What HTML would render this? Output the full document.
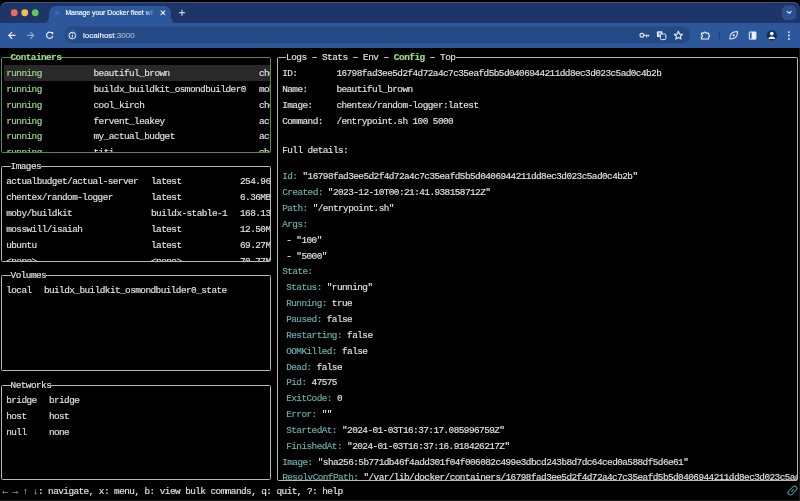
<!DOCTYPE html>
<html><head><meta charset="utf-8"><style>
*{margin:0;padding:0;box-sizing:border-box}
html,body{width:800px;height:501px;overflow:hidden;background:#000}
body{position:relative;font-family:"Liberation Sans",sans-serif}
.a{position:absolute}
.t{position:absolute;white-space:pre;font-family:"Liberation Mono",monospace;font-size:9.4px;line-height:10px;letter-spacing:-0.55px;-webkit-text-stroke-width:0.15px}
#root{position:absolute;left:0;top:0;width:800px;height:501px;will-change:transform}
.box{position:absolute;border:1px solid #b8b8b8;border-radius:1.5px}
.clip{position:absolute;overflow:hidden}
</style></head><body><div id="root">

<div class="a" style="left:0;top:0;width:800px;height:48px;background:#000"></div>
<div class="a" style="left:0;top:2px;width:800px;height:46px;background:#1d3567;border-radius:7px 7px 0 0;box-shadow:inset 0 1px 0 #3a5584"></div>
<div class="a" style="left:0;top:22.5px;width:800px;height:25px;background:#2d579b"></div>
<div class="a" style="left:49px;top:5.5px;width:122px;height:17.5px;background:#2d579b;border-radius:7px 7px 0 0"></div>
<svg class="a" style="left:0;top:0" width="800" height="48">
 <path d="M43 22.5 Q49 22.5 49 16.5 V22.5 Z" fill="#2d579b"/>
 <path d="M177 22.5 Q171 22.5 171 16.5 V22.5 Z" fill="#2d579b"/>
 <rect x="782" y="5.6" width="14.3" height="14.3" rx="4.5" fill="#2c4f90"/>
 <path d="M787.2 11.4 L789.2 13.4 L791.2 11.4" stroke="#e8eefa" stroke-width="1.05" fill="none" stroke-linecap="round" stroke-linejoin="round"/>
 <circle cx="14.25" cy="12.75" r="3.4" fill="#ed6a5e"/>
 <circle cx="24.75" cy="12.75" r="3.4" fill="#f5bf4f"/>
 <circle cx="35.25" cy="12.75" r="3.4" fill="#62c554"/>
 <circle cx="57" cy="12.7" r="2.3" fill="#3e62c0"/>
 <path d="M161 10.8 L164.8 14.6 M164.8 10.8 L161 14.6" stroke="#e8eefa" stroke-width="1.05" stroke-linecap="round"/>
 <path d="M179.3 12.75 H184.7 M182 10.05 V15.45" stroke="#e8eefa" stroke-width="1" stroke-linecap="round"/>
 <!-- back -->
 <path d="M15 35.4 H8.8 M11.8 32.3 L8.7 35.4 L11.8 38.5" stroke="#eef2fb" stroke-width="1.1" fill="none" stroke-linecap="round" stroke-linejoin="round"/>
 <path d="M27.6 35.4 H33.6 M30.6 32.3 L33.7 35.4 L30.6 38.5" stroke="#8ea7d3" stroke-width="1.1" fill="none" stroke-linecap="round" stroke-linejoin="round"/>
 <path d="M52.3 33.6 A3.1 3.1 0 1 0 52.6 36.3" stroke="#eef2fb" stroke-width="1.1" fill="none" stroke-linecap="round"/>
 <path d="M50.6 32 L53.2 32 L53.2 34.6 Z" fill="#eef2fb"/>
 <rect x="64.4" y="26.5" width="626" height="16.8" rx="8.4" fill="#244984"/>
 <circle cx="72.3" cy="34.9" r="6.5" fill="#2a5290"/>
 <circle cx="72.3" cy="35.5" r="3.3" stroke="#eef2fb" stroke-width="1" fill="none"/>
 <path d="M72.3 34.7 V37.4" stroke="#eef2fb" stroke-width="1"/>
 <circle cx="72.3" cy="33.4" r="0.5" fill="#eef2fb"/>
 <!-- key -->
 <circle cx="641.9" cy="35.2" r="1.9" stroke="#dfe6f5" stroke-width="1.2" fill="none"/>
 <path d="M643.8 35.2 H648.6 V36.6 M646.6 35.2 V37.6" stroke="#dfe6f5" stroke-width="1.1" fill="none"/>
 <!-- translate -->
 <rect x="656.9" y="31.3" width="5.6" height="5.8" rx="0.9" fill="#dfe6f5"/>
 <path d="M658.6 33.2 h2.2 M659.7 33.2 v2.4" stroke="#244984" stroke-width="0.7"/>
 <rect x="660.4" y="34" width="5.4" height="5.6" rx="0.9" stroke="#dfe6f5" stroke-width="1" fill="#244984"/>
 <!-- star -->
 <path d="M678.4 31.3 L679.6 34.1 L682.5 34.3 L680.3 36.2 L681 39.1 L678.4 37.5 L675.8 39.1 L676.5 36.2 L674.3 34.3 L677.2 34.1 Z" stroke="#dfe6f5" stroke-width="1.15" fill="none" stroke-linejoin="round"/>
 <!-- puzzle -->
 <path d="M701.4 33.1 H703.7 A1.05 1.05 0 0 1 705.8 33.1 H708.6 V34.8 A1.05 1.05 0 0 1 708.6 36.9 V39 H701.4 V37 A1.1 1.1 0 0 0 701.4 34.8 Z" stroke="#eef2fb" stroke-width="1.1" fill="none" stroke-linejoin="round"/>
 <path d="M719.3 32 V39" stroke="#1d3b70" stroke-width="1"/>
 <!-- gemini-ish icon -->
 <path d="M729.9 38.9 Q729.3 31.7 737.5 31.5 Q737.9 38.9 729.9 38.9 Z" stroke="#eef2fb" stroke-width="1.05" fill="none" stroke-linejoin="round"/>
 <circle cx="733.7" cy="35.3" r="1.1" fill="#eef2fb"/>
 <!-- sidebar -->
 <rect x="749.3" y="32" width="6.6" height="7.1" rx="0.3" stroke="#eef2fb" stroke-width="1" fill="none"/>
 <rect x="751.6" y="32" width="4.3" height="7.1" fill="#eef2fb"/>
 <!-- profile -->
 <circle cx="771.8" cy="35.4" r="5.1" fill="#142a57"/>
 <circle cx="771.8" cy="33.6" r="1.9" fill="#f2f5fc"/>
 <path d="M768.4 39 Q768.6 36.4 771.8 36.4 Q775 36.4 775.2 39 Z" fill="#f2f5fc"/>
 <circle cx="788.9" cy="32.1" r="0.95" fill="#eef2fb"/>
 <circle cx="788.9" cy="35.5" r="0.95" fill="#eef2fb"/>
 <circle cx="788.9" cy="38.9" r="0.95" fill="#eef2fb"/>
</svg>
<div class="a" style="left:65.4px;top:8px;font-size:6.85px;line-height:9px;color:#f2f5fc;-webkit-text-stroke-width:0.2px;white-space:pre;width:93px;overflow:hidden;-webkit-mask-image:linear-gradient(90deg,#000 79px,transparent 89px)">Manage your Docker fleet with</div>
<div class="a" style="left:83px;top:30.5px;font-size:8px;line-height:10px;color:#f2f5fc;-webkit-text-stroke-width:0.15px;white-space:pre">localhost<span style="color:#a3b4d6">:3000</span></div>
<div class="box" style="left:1px;top:57px;width:270px;height:96px;border-color:#5a8a4a"></div><div class="clip" style="left:2px;top:58px;width:268px;height:94px"><div class="a" style="left:-2px;top:-58px;width:800px;height:501px"><div class="a" style="left:3.5px;top:65px;width:266px;height:15.6px;background:#292929"></div><div class="t" style="left:6.20px;top:69px;color:#a3d991;">running</div><div class="t" style="left:93.50px;top:69px;color:#e2e2e2;">beautiful_brown</div><div class="t" style="left:258.90px;top:69px;color:#e2e2e2;">chentex</div><div class="t" style="left:6.20px;top:85px;color:#a3d991;">running</div><div class="t" style="left:93.50px;top:85px;color:#e2e2e2;">buildx_buildkit_osmondbuilder0</div><div class="t" style="left:258.90px;top:85px;color:#e2e2e2;">moby</div><div class="t" style="left:6.20px;top:101px;color:#a3d991;">running</div><div class="t" style="left:93.50px;top:101px;color:#e2e2e2;">cool_kirch</div><div class="t" style="left:258.90px;top:101px;color:#e2e2e2;">chentex</div><div class="t" style="left:6.20px;top:117px;color:#a3d991;">running</div><div class="t" style="left:93.50px;top:117px;color:#e2e2e2;">fervent_leakey</div><div class="t" style="left:258.90px;top:117px;color:#e2e2e2;">actual</div><div class="t" style="left:6.20px;top:132px;color:#a3d991;">running</div><div class="t" style="left:93.50px;top:132px;color:#e2e2e2;">my_actual_budget</div><div class="t" style="left:258.90px;top:132px;color:#e2e2e2;">actual</div><div class="t" style="left:6.20px;top:148px;color:#a3d991;">running</div><div class="t" style="left:93.50px;top:148px;color:#e2e2e2;">titi</div><div class="t" style="left:258.90px;top:148px;color:#e2e2e2;">chentex</div></div></div><div class="t" style="left:10.50px;top:53px;background:#000;"><span style="color:#9de086;font-weight:bold;">Containers</span></div><div class="box" style="left:1px;top:166px;width:270px;height:96px;border-color:#b8b8b8"></div><div class="clip" style="left:2px;top:167px;width:268px;height:94px"><div class="a" style="left:-2px;top:-167px;width:800px;height:501px"><div class="t" style="left:6.20px;top:177px;color:#e2e2e2;">actualbudget/actual-server</div><div class="t" style="left:151.00px;top:177px;color:#e2e2e2;">latest</div><div class="t" style="left:240.00px;top:177px;color:#e2e2e2;">254.96MB</div><div class="t" style="left:6.20px;top:193px;color:#e2e2e2;">chentex/random-logger</div><div class="t" style="left:151.00px;top:193px;color:#e2e2e2;">latest</div><div class="t" style="left:240.00px;top:193px;color:#e2e2e2;">6.36MB</div><div class="t" style="left:6.20px;top:209px;color:#e2e2e2;">moby/buildkit</div><div class="t" style="left:151.00px;top:209px;color:#e2e2e2;">buildx-stable-1</div><div class="t" style="left:240.00px;top:209px;color:#e2e2e2;">168.13MB</div><div class="t" style="left:6.20px;top:225px;color:#e2e2e2;">mosswill/isaiah</div><div class="t" style="left:151.00px;top:225px;color:#e2e2e2;">latest</div><div class="t" style="left:240.00px;top:225px;color:#e2e2e2;">12.50MB</div><div class="t" style="left:6.20px;top:241px;color:#e2e2e2;">ubuntu</div><div class="t" style="left:151.00px;top:241px;color:#e2e2e2;">latest</div><div class="t" style="left:240.00px;top:241px;color:#e2e2e2;">69.27MB</div><div class="t" style="left:6.20px;top:257px;color:#e2e2e2;">&lt;none&gt;</div><div class="t" style="left:151.00px;top:257px;color:#e2e2e2;">&lt;none&gt;</div><div class="t" style="left:240.00px;top:257px;color:#e2e2e2;">70.77MB</div></div></div><div class="t" style="left:10.60px;top:162px;background:#000;"><span style="color:#e2e2e2;">Images</span></div><div class="box" style="left:1px;top:275px;width:270px;height:96px;border-color:#b8b8b8"></div><div class="clip" style="left:2px;top:276px;width:268px;height:94px"><div class="a" style="left:-2px;top:-276px;width:800px;height:501px"><div class="t" style="left:6.20px;top:286px;color:#e2e2e2;">local</div><div class="t" style="left:43.90px;top:286px;color:#e2e2e2;">buildx_buildkit_osmondbuilder0_state</div></div></div><div class="t" style="left:10.60px;top:271px;background:#000;"><span style="color:#e2e2e2;">Volumes</span></div><div class="box" style="left:1px;top:385px;width:270px;height:95px;border-color:#b8b8b8"></div><div class="clip" style="left:2px;top:386px;width:268px;height:93px"><div class="a" style="left:-2px;top:-386px;width:800px;height:501px"><div class="t" style="left:6.20px;top:396px;color:#e2e2e2;">bridge</div><div class="t" style="left:48.90px;top:396px;color:#e2e2e2;">bridge</div><div class="t" style="left:6.20px;top:412px;color:#e2e2e2;">host</div><div class="t" style="left:48.90px;top:412px;color:#e2e2e2;">host</div><div class="t" style="left:6.20px;top:428px;color:#e2e2e2;">null</div><div class="t" style="left:48.90px;top:428px;color:#e2e2e2;">none</div></div></div><div class="t" style="left:10.60px;top:381px;background:#000;"><span style="color:#e2e2e2;">Networks</span></div><div class="box" style="left:277px;top:57px;width:521px;height:424px;border-color:#b8b8b8"></div><div class="clip" style="left:278px;top:58px;width:519px;height:422px"><div class="a" style="left:-278px;top:-58px;width:800px;height:501px"><div class="t" style="left:282.20px;top:69px;color:#e2e2e2;">ID:</div><div class="t" style="left:336.40px;top:69px;color:#e2e2e2;">16798fad3ee5d2f4d72a4c7c35eafd5b5d0406944211dd8ec3d023c5ad0c4b2b</div><div class="t" style="left:282.20px;top:85px;color:#e2e2e2;">Name:</div><div class="t" style="left:336.40px;top:85px;color:#e2e2e2;">beautiful_brown</div><div class="t" style="left:282.20px;top:101px;color:#e2e2e2;">Image:</div><div class="t" style="left:336.40px;top:101px;color:#e2e2e2;">chentex/random-logger:latest</div><div class="t" style="left:282.20px;top:117px;color:#e2e2e2;">Command:</div><div class="t" style="left:336.40px;top:117px;color:#e2e2e2;">/entrypoint.sh 100 5000</div><div class="t" style="left:282.20px;top:146px;color:#e2e2e2;">Full details:</div><div class="t" style="left:282.20px;top:172px"><span style="color:#68b3ac">Id:</span><span style="color:#e2e2e2"> &quot;16798fad3ee5d2f4d72a4c7c35eafd5b5d0406944211dd8ec3d023c5ad0c4b2b&quot;</span></div><div class="t" style="left:282.20px;top:188px"><span style="color:#68b3ac">Created:</span><span style="color:#e2e2e2"> &quot;2023-12-10T00:21:41.938158712Z&quot;</span></div><div class="t" style="left:282.20px;top:204px"><span style="color:#68b3ac">Path:</span><span style="color:#e2e2e2"> &quot;/entrypoint.sh&quot;</span></div><div class="t" style="left:282.20px;top:220px"><span style="color:#68b3ac">Args:</span></div><div class="t" style="left:281.10px;top:236px"><span style="color:#e2e2e2"> - &quot;100&quot;</span></div><div class="t" style="left:281.10px;top:252px"><span style="color:#e2e2e2"> - &quot;5000&quot;</span></div><div class="t" style="left:282.20px;top:267px"><span style="color:#68b3ac">State:</span></div><div class="t" style="left:281.10px;top:283px"><span style="color:#68b3ac"> Status:</span><span style="color:#e2e2e2"> &quot;running&quot;</span></div><div class="t" style="left:281.10px;top:299px"><span style="color:#68b3ac"> Running:</span><span style="color:#e2e2e2"> true</span></div><div class="t" style="left:281.10px;top:315px"><span style="color:#68b3ac"> Paused:</span><span style="color:#e2e2e2"> false</span></div><div class="t" style="left:281.10px;top:331px"><span style="color:#68b3ac"> Restarting:</span><span style="color:#e2e2e2"> false</span></div><div class="t" style="left:281.10px;top:347px"><span style="color:#68b3ac"> OOMKilled:</span><span style="color:#e2e2e2"> false</span></div><div class="t" style="left:281.10px;top:363px"><span style="color:#68b3ac"> Dead:</span><span style="color:#e2e2e2"> false</span></div><div class="t" style="left:281.10px;top:378px"><span style="color:#68b3ac"> Pid:</span><span style="color:#e2e2e2"> 47575</span></div><div class="t" style="left:281.10px;top:394px"><span style="color:#68b3ac"> ExitCode:</span><span style="color:#e2e2e2"> 0</span></div><div class="t" style="left:281.10px;top:410px"><span style="color:#68b3ac"> Error:</span><span style="color:#e2e2e2"> &quot;&quot;</span></div><div class="t" style="left:281.10px;top:426px"><span style="color:#68b3ac"> StartedAt:</span><span style="color:#e2e2e2"> &quot;2024-01-03T16:37:17.085996759Z&quot;</span></div><div class="t" style="left:281.10px;top:442px"><span style="color:#68b3ac"> FinishedAt:</span><span style="color:#e2e2e2"> &quot;2024-01-03T16:37:16.918426217Z&quot;</span></div><div class="t" style="left:282.20px;top:458px"><span style="color:#68b3ac">Image:</span><span style="color:#e2e2e2"> &quot;sha256:5b771db46f4add301f04f006082c499e3dbcd243b8d7dc64ced0a588df5d6e61&quot;</span></div><div class="t" style="left:282.20px;top:473px"><span style="color:#68b3ac">ResolvConfPath:</span><span style="color:#e2e2e2"> &quot;/var/lib/docker/containers/16798fad3ee5d2f4d72a4c7c35eafd5b5d0406944211dd8ec3d023c5ad0c4b2b/resolv.conf&quot;</span></div></div></div><div class="t" style="left:286.00px;top:53px;background:#000;letter-spacing:-0.49px;"><span style="color:#e2e2e2;">Logs – Stats – Env – </span><span style="color:#9de086;font-weight:bold;">Config</span><span style="color:#e2e2e2;"> – Top</span></div><div class="t" style="left:2.40px;top:487px"><span style="color:#a0a0a0">← → ↑ ↓</span><span style="color:#e2e2e2">: navigate, x: menu, b: view bulk commands, q: quit, ?: help</span></div><div class="a" style="left:799px;top:48px;width:1px;height:453px;background:#1c1c1c"></div><div class="a" style="left:0;top:500px;width:800px;height:1px;background:#1c1c1c"></div><svg class="a" style="left:784px;top:483px" width="16" height="16"><g transform="rotate(-45 8.5 7.5)"><rect x="3.2" y="5.2" width="10.6" height="4.6" rx="2.3" stroke="#4aa9b0" stroke-width="1" fill="none"/><path d="M7 7.5 H10" stroke="#4aa9b0" stroke-width="1"/></g></svg>
</div></body></html>
